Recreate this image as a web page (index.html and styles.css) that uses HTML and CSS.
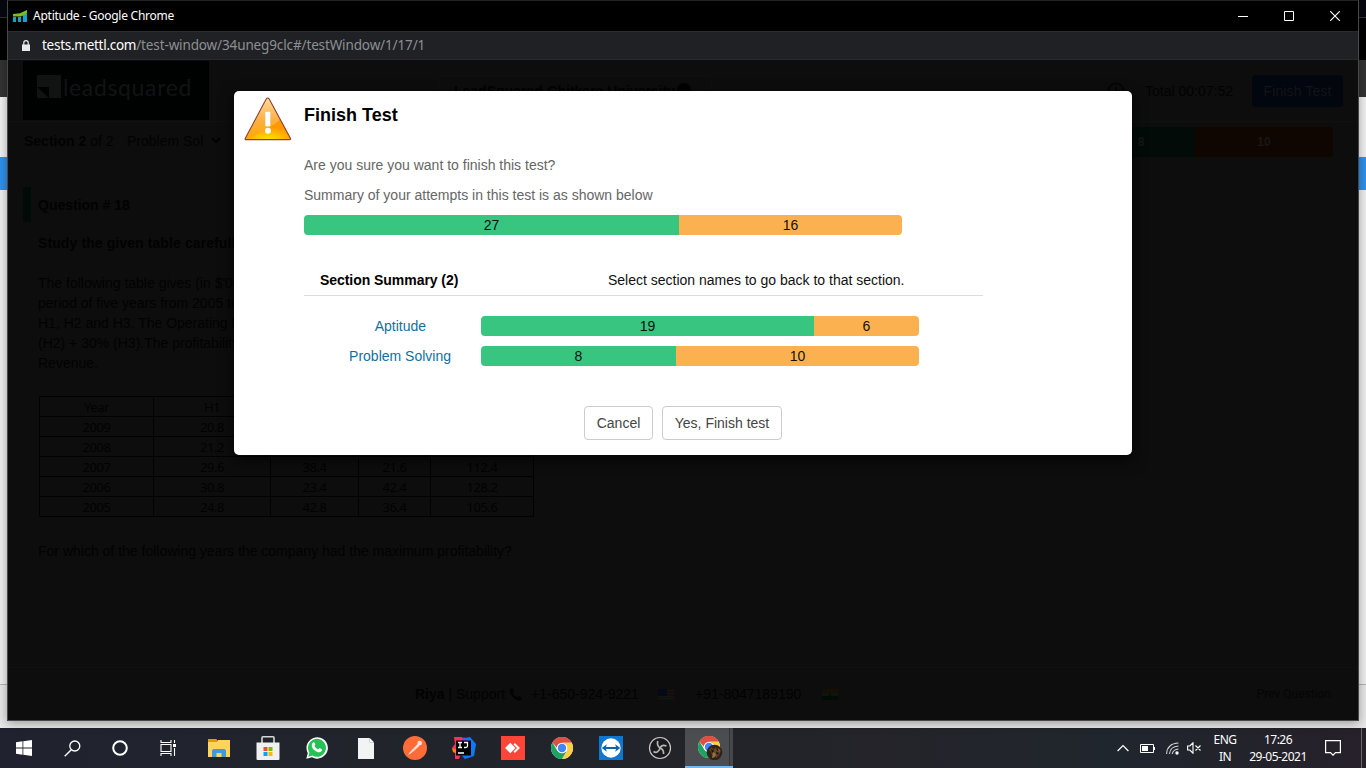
FILE: index.html
```html
<!DOCTYPE html>
<html lang="en">
<head>
<meta charset="utf-8">
<title>Aptitude - Google Chrome</title>
<link rel="stylesheet" href="styles.css">
</head>
<body>
<svg width="0" height="0" class="defs" aria-hidden="true">
  <defs>
    <symbol id="chrome" viewBox="0 0 24 24">
      <circle cx="12" cy="12" r="11" fill="#fff"/>
      <path d="M12 12 2.47 6.5A11 11 0 0 1 21.53 6.5Z" fill="#dd5144"/>
      <path d="M12 1a11 11 0 0 1 9.53 5.5H12L7 12 2.47 6.5A11 11 0 0 1 12 1Z" fill="#dd5144"/>
      <path d="M21.53 6.5A11 11 0 0 1 12 23l5-8.2L16 8l-4-1.5Z" fill="#ffcd46"/>
      <path d="M2.47 6.5A11 11 0 0 0 12 23l4.5-7.7-4.3 1.5L7.5 15Z" fill="#1da462"/>
      <circle cx="12" cy="12" r="5.3" fill="#fff"/>
      <circle cx="12" cy="12" r="4.2" fill="#4285f4"/>
    </symbol>
  </defs>
</svg>
<div class="desktop">
  <div class="behind">
    <div class="b-top"></div><div class="b-black"></div><div class="b-grey"></div><div class="b-light"></div><div class="b-blue"></div><div class="b-page"></div><div class="b-foot"></div>
  </div>

  <div class="window">
    <div class="titlebar">
      <svg class="favicon" width="15" height="12" viewBox="0 0 15 12"><path d="M0 7h3v5H0zM5 7h3v5H5zM10 4h4v8h-4z" fill="#08a7d0"/><path d="M0 4 7 3.2 14 0v3.5L8 6.5H0Z" fill="#78be20"/></svg>
      <span class="title">Aptitude - Google Chrome</span>
      <div class="controls">
        <svg width="10" height="10" viewBox="0 0 10 10"><path d="M0 5.5h10" stroke="#fff"/></svg>
        <svg width="10" height="10" viewBox="0 0 10 10"><path d="M.5.5h9v9h-9z" stroke="#fff" fill="none"/></svg>
        <svg width="10" height="10" viewBox="0 0 10 10"><path d="m.2.2 9.6 9.6M9.8.2.2 9.8" stroke="#fff" stroke-width="1.1"/></svg>
      </div>
    </div>
    <div class="urlbar">
      <svg width="8" height="11" viewBox="0 0 8 11"><path d="M0 4.5h8V11H0z" fill="#e8eaed"/><path d="M1.8 5V2.8a2.2 2.2 0 0 1 4.4 0V5" fill="none" stroke="#e8eaed" stroke-width="1.2"/></svg>
      <span class="url"><b>tests.mettl.com</b>/test-window/34uneg9clc#/testWindow/1/17/1</span>
    </div>

    <div class="page">
      <header class="head">
        <div class="logo">
          <svg width="24" height="23" viewBox="0 0 24 23"><path d="M0 0h24v23H12V12H0Z" fill="#111313"/><path d="M0 12v11h12Z" fill="#111313"/></svg>
          <span>leadsquared</span>
        </div>
        <div class="test-name"><span>LeadSquared-Chitkara University</span><i></i></div>
        <div class="timer">
          <svg width="18" height="18" viewBox="0 0 18 18"><circle cx="9" cy="9" r="7.6" fill="none" stroke="#050505" stroke-width="2"/><path d="M9 4v5h4" fill="none" stroke="#050505" stroke-width="1.5"/></svg>
          <span class="time">Total 00:07:52</span>
          <span class="finish">Finish Test</span>
        </div>
      </header>
      <div class="section-row">
        <span class="sec"><b>Section 2</b> of 2</span>
        <span class="pick">Problem Sol</span>
        <svg width="10" height="7" viewBox="0 0 10 7"><path d="m1 1.2 4 4 4-4" fill="none" stroke="#020202" stroke-width="2"/></svg>
        <div class="mini"><b class="mini-g">8</b><b class="mini-o">10</b></div>
      </div>
      <div class="question-head">Question # 18</div>
      <div class="question">
        <p class="lead">Study the given table carefully</p>
        <p class="para"><span>The following table gives (in $'000)</span><br><span>period of five years from 2005 to</span><br><span>H1, H2 and H3. The Operating Profit</span><br><span>(H2) + 30% (H3).The profitability is</span><br><span>Revenue.</span></p>
        <table class="data">
          <colgroup><col class="c1"><col class="c2"><col class="c3"><col class="c4"><col class="c5"></colgroup>
          <tr><td>Year</td><td>H1</td><td></td><td></td><td></td></tr>
          <tr><td>2009</td><td>20.8</td><td></td><td></td><td></td></tr>
          <tr><td>2008</td><td>21.2</td><td></td><td></td><td></td></tr>
          <tr><td>2007</td><td>29.6</td><td>38.4</td><td>21.6</td><td>112.4</td></tr>
          <tr><td>2006</td><td>30.8</td><td>23.4</td><td>42.4</td><td>128.2</td></tr>
          <tr><td>2005</td><td>24.8</td><td>42.8</td><td>36.4</td><td>105.6</td></tr>
        </table>
        <p class="ask">For which of the following years the company had the maximum profitability?</p>
      </div>
      <footer class="foot">
        <span><b>Riya</b> | Support</span>
        <svg class="phone" width="13" height="13" viewBox="0 0 13 13"><path d="M1 1 3.3 0 5.2 3.2 3.8 4.8Q5 7.6 8 9.2L9.5 7.900 13 9.800 12 12Q9.800 13.800 5.500 10.600 0 6.200 1 1Z" fill="#030303"/></svg>
        <span class="us-num">+1-650-924-9221</span>
        <svg class="us" width="16" height="11" viewBox="0 0 16 11"><path d="M0 0h16v11H0z" fill="#1a0b0b"/><path d="M0 1.500h16M0 4.500h16M0 7.500h16M0 9.500h16" stroke="#141414"/><path d="M0 0h9v7H0z" fill="#030917"/></svg>
        <span class="in-num">+91-8047189190</span>
        <svg class="in" width="16" height="11" viewBox="0 0 16 11"><path d="M0 0h16v4H0z" fill="#151003"/><path d="M0 4h16v3H0z" fill="#121212"/><path d="M0 7h16v4H0z" fill="#020d02"/><circle cx="8" cy="5.5" r="1.3" fill="#070b17"/></svg>
        <span class="prev">Prev Question</span>
      </footer>
    </div>
  </div>

  <div class="modal">
    <svg class="warn" width="48" height="46" viewBox="0 0 48 46">
      <defs><linearGradient id="wg" x1="0" y1="0" x2="0" y2="1"><stop offset="0" stop-color="#ffd9a0"/><stop offset=".55" stop-color="#fbb040"/><stop offset="1" stop-color="#ffa800"/></linearGradient><radialGradient id="wy" cx=".5" cy="1" r=".6"><stop offset="0" stop-color="#ffe400"/><stop offset="1" stop-color="#ff9800"/></radialGradient></defs>
      <path d="M22.2 2Q23.700 0 25.200 2L46.500 41.500Q46.800 42.600 45.500 42.600H2Q.8 42.600 1.200 41.500Z" fill="url(#wg)"/>
      <path d="M1.400 42Q21 35 36.500 22.500L46.500 42Z" fill="url(#wy)"/>
      <path d="M22.200 2Q23.700 0 25.200 2L46.500 41.500Q46.800 42.600 45.500 42.600H2Q.8 42.600 1.200 41.500Z" fill="none" stroke="#8f3f2c" stroke-width="1.100"/>
      <path d="M21.300 14.800h5v14.500h-5z" fill="#fff"/><circle cx="24" cy="33.800" r="3" fill="#fff"/>
    </svg>
    <div class="modal-body">
      <h1><span>Finish Test</span></h1>
      <p class="m1"><span>Are you sure you want to finish this test?</span></p>
      <p class="m2"><span>Summary of your attempts in this test is as shown below</span></p>
      <div class="bar total"><span class="g">27</span><span class="o">16</span></div>
      <div class="sum-head"><b>Section Summary (2)</b><span>Select section names to go back to that section.</span></div>
      <div class="sum-row first"><a><span>Aptitude</span></a><div class="bar apt"><span class="g">19</span><span class="o">6</span></div></div>
      <div class="sum-row"><a><span>Problem Solving</span></a><div class="bar prob"><span class="g">8</span><span class="o">10</span></div></div>
    </div>
    <div class="buttons"><span class="btn cancel">Cancel</span><span class="btn yes">Yes, Finish test</span></div>
  </div>

  <div class="taskbar">
    <div class="cell"><svg width="16" height="16" viewBox="0 0 16 16"><path d="M0 2.2 6.5 1.3v6.2H0zM7.3 1.200 16 0v7.500H7.300zM0 8.400h6.500v6.300L0 13.800zM7.300 8.400H16V16l-8.700-1.200z" fill="#fff"/></svg></div>
    <div class="cell"><svg width="17" height="17" viewBox="0 0 17 17"><circle cx="10.8" cy="6" r="5" fill="none" stroke="#fff" stroke-width="1.3"/><path d="M7.3 9.7.7 16.3" stroke="#fff" stroke-width="1.4"/></svg></div>
    <div class="cell"><svg width="16" height="16" viewBox="0 0 16 16"><circle cx="8" cy="8" r="6.8" fill="none" stroke="#fff" stroke-width="2"/></svg></div>
    <div class="cell"><svg width="17" height="16" viewBox="0 0 17 16"><path d="M1 0v2.5h10V0M1 16v-2.5h10V16M1 4.5h10v7H1zM14.5 0v3M14.5 8v8" fill="none" stroke="#fff" stroke-width="1.1"/><path d="M13 4h3v3h-3z" fill="#fff"/></svg></div>
    <div class="cell g5"><svg width="22" height="19" viewBox="0 0 22 19"><path d="M0 1h8l2 2h11.5v15H0z" fill="#e8a317"/><path d="M0 3h8.500L10 1h12v17H0z" fill="#ffd45c"/><path d="M0 0h8.500l1 2-1 1H0z" fill="#e29a05"/><path d="M4 18v-6.500L5.500 10h11l1.500 1.500V18h-4.500v-4h-5v4z" fill="#3e9adf"/></svg></div>
    <div class="cell g6"><svg width="24" height="24" viewBox="0 0 24 24"><path d="M6 7V1.800Q6 .800 7 .800h10Q18 .800 18 1.800V7" fill="none" stroke="#d7d7d7" stroke-width="1.600"/><path d="M.5 6.500h23V23q0 1-1 1h-21q-1 0-1-1z" fill="#f0f0f0"/><path d="M7.500 11h4v4h-4z" fill="#f25022"/><path d="M12.500 11h4v4h-4z" fill="#7fba00"/><path d="M7.500 16h4v4h-4z" fill="#00a4ef"/><path d="M12.500 16h4v4h-4z" fill="#ffb900"/></svg></div>
    <div class="cell g7"><svg width="22" height="22" viewBox="0 0 22 22"><path d="m.3 21.700 1.500-5.600A10.700 10.700 0 1 1 6 20.300Z" fill="#fff"/><path d="m2.300 19.700 1.100-4a9 9 0 1 1 3 2.900Z" fill="#24c254"/><path d="M7 5.500q1.300-.8 1.800.6l.6 1.500-1 1.400q1.200 2.300 3.700 3.400l1.300-1.400 2.400 1.200q.5.500 0 1.500-1.600 2.400-4.600 1.200Q6.700 13.100 5.800 9.300 5.500 6.800 7 5.500Z" fill="#fff"/></svg></div>
    <div class="cell g8"><svg width="16" height="21" viewBox="0 0 16 21"><path d="M0 0h11.500L16 4.500V21H0z" fill="#f2f4f4"/><path d="M11.500 0v4.500H16" fill="#a8adad"/><path d="M12 .5 15.500 4H12z" fill="#fff"/></svg></div>
    <div class="cell g9"><svg width="24" height="24" viewBox="0 0 24 24"><circle cx="12" cy="12" r="12" fill="#ff6c37"/><path d="M5.500 18 10 12.500l2 1.700L7 18z" fill="#ffc9b5"/><path d="m10.300 12.500 4.500-4.700 2 1.800-4.800 4.500z" fill="#ffd8c9"/><circle cx="16.700" cy="7" r="2.300" fill="#ffe7dd"/><path d="m5.500 18.500 10-9.500" stroke="#fff" stroke-width=".7"/></svg></div>
    <div class="cell g10"><svg width="24" height="24" viewBox="0 0 24 24"><path d="M2 1h8l3 5-6 17H3V14L0 12l3-4z" fill="#fe315d"/><path d="m0 12 5 2v4l-4-2z" fill="#fc801d"/><path d="m13 2 5-1 6 7-2 12-9 3-5-5z" fill="#087cfa"/><path d="m12 1 5 5H8z" fill="#7a46d8"/><path d="M4 4.500h15V19.500H4z" fill="#000"/><path d="M6 6.500h4M8 6.500v5M6 11.500h4M12 6.500h3.500V10q0 1.500-2 1.500H12M6 17h6" fill="none" stroke="#fff" stroke-width="1.300"/></svg></div>
    <div class="cell g11"><svg width="24" height="24" viewBox="0 0 24 24"><path d="M0 0h24v24H0z" fill="#ff4438"/><path d="m9.300 6.800 5.200 5.200-5.200 5.200L4.100 12z" fill="#fff"/><path d="m13.200 7.700 4.300 4.300-4.300 4.300" fill="none" stroke="#fff" stroke-width="2"/></svg></div>
    <div class="cell g12"><svg width="24" height="24"><use href="#chrome"/></svg></div>
    <div class="cell g13"><svg width="24" height="24" viewBox="0 0 24 24"><path d="M0 0h24v24H0z" fill="#0e78d1"/><circle cx="12" cy="12" r="9.700" fill="#fff"/><path d="m2.800 12 5-3.800-.8 2.800h10l-.8-2.800 5 3.800-5 3.800.8-2.800H7l.8 2.800z" fill="#0e62a8"/></svg></div>
    <div class="cell g14"><svg width="24" height="24" viewBox="0 0 24 24"><circle cx="12" cy="12" r="10.500" fill="#1b1a1d" stroke="#c8c8c8" stroke-width="1.200"/><path d="M9.800 5q-1.300 4.500 2.200 7M18.500 10q-4.500-2-6.500 2M5.500 15.500q4 2.500 6.500-3M12 12q4 1.500 3.500 6" fill="none" stroke="#b5b5b7" stroke-width="1.700"/></svg></div>
    <div class="active"><svg width="26" height="26" viewBox="0 0 26 26"><use href="#chrome" width="24" height="24" x="0" y="1"/><circle cx="17.500" cy="18.500" r="7.800" fill="#302217"/><path d="m12 16 3-3 1 3 3-3 1 4 4-1-2 5-3 3-1-4-3 1-1-3z" fill="#664526"/><path d="m16 18 3 2-1 3-3 1zM21 14l2 2-1 2z" fill="#967246"/><path d="m14 15 3 2-2 2zM19 18l3 1-2 2z" fill="#11100d"/></svg></div>
    <div class="tray">
      <svg class="t1" width="12" height="8" viewBox="0 0 12 8"><path d="m.6 7 5.400-5.500L11.400 7" fill="none" stroke="#fff" stroke-width="1.200"/></svg>
      <svg class="t2" width="15" height="9" viewBox="0 0 15 9"><path d="M.5.5h13v8H.5zM14.500 3v3" fill="none" stroke="#fff"/><path d="M2 2h6v5H2z" fill="#fff"/></svg>
      <svg class="t3" width="13" height="13" viewBox="0 0 13 13"><path d="M.6 12Q1 1.500 12.500 1M3.500 12Q4 4.500 12.500 4M6.300 12Q7 7.500 12.500 7" fill="none" stroke="#d0d0d2" stroke-width="1.100"/><circle cx="11" cy="11" r="1.700" fill="#fff"/></svg>
      <svg class="t4" width="14" height="12" viewBox="0 0 14 12"><path d="M.6 4h2.200L6 .8v10.400L2.800 8H.6zM8.500 3.500l5 5M13.500 3.500l-5 5" fill="none" stroke="#fff" stroke-width="1.100"/></svg>
      <div class="lang"><span>ENG</span><span>IN</span></div>
      <div class="clock"><span>17:26</span><span class="date">29-05-2021</span></div>
      <svg class="t5" width="16" height="16" viewBox="0 0 16 16"><path d="M.6.600h14.800v12H10.500L8 15.200 5.500 12.600H.6z" fill="none" stroke="#fff" stroke-width="1.200"/></svg>
    </div>
    <div class="peek"></div>
  </div>
</div>
</body>
</html>
```

FILE: styles.css
```css
* { box-sizing: border-box; }
body { margin: 0; font: 14px/20px "Liberation Sans", Arial, sans-serif; color: #020202; overflow: hidden; }
p, h1 { margin: 0; }
svg { display: block; flex: none; }
.defs { position: absolute; }
.desktop { position: relative; width: 1366px; height: 768px; display: flex; flex-direction: column; overflow: hidden; }

/* application showing round the edges of the window */
.behind { height: 728px; flex: none; display: flex; flex-direction: column; background: #e6e6e6; }
.b-top { height: 18px; background: #07070f; border-bottom: 1px solid #333; }
.b-black { height: 42px; background: #000; }
.b-grey { height: 37px; background: #333; }
.b-light { height: 60px; background: #f2f2f2; }
.b-blue { height: 33px; background: #2f92ee; }
.b-page { height: 495px; background: #f0f0f0; border-bottom: 1px solid #b4b4b4; }
.b-foot { flex: 1; background: #e8e8e8; }

.window { position: absolute; left: 7px; top: 0; width: 1352px; height: 721px; border: 1px solid #484848; border-top-color: #222; background: #0d0d0d; box-shadow: 0 2px 10px rgba(0,0,0,.35); display: flex; flex-direction: column; }
.titlebar { height: 30px; flex: none; background: #000; display: flex; align-items: center; padding-left: 5px; color: #fff; }
.title { font: 12px/16px "Noto Sans", sans-serif; letter-spacing: -.25px; margin-left: 5px; white-space: nowrap; }
.controls { margin-left: auto; display: flex; gap: 36px; padding-right: 18px; }
.urlbar { height: 29px; flex: none; background: #202124; border-top: 1px solid #2a2b2e; border-bottom: 1px solid #292a2d; display: flex; align-items: center; padding: 0 0 1px 14px; }
.url { margin-left: 12px; font: 14px/20px "Noto Sans", sans-serif; font-size: 13.5px; color: #8d9093; white-space: nowrap; letter-spacing: -.13px; }
.url b { font-weight: 400; color: #fff; letter-spacing: -.27px; }

.page { flex: 1; display: flex; flex-direction: column; }
.head { height: 62px; flex: none; display: flex; align-items: flex-start; padding: 1px 15px 0; border-bottom: 1px solid #101010; }
.logo { width: 186px; height: 59px; background: #000202; display: flex; align-items: center; padding: 0 0 9px 14px; color: #111313; }
.logo span { font: 23px/28px Lato, sans-serif; letter-spacing: .65px; margin: 2px 0 0 2px; }
.test-name { margin: 14px 0 0 229px; width: 274px; height: 40px; border: 1px solid #101010; border-radius: 4px; display: flex; align-items: flex-start; padding: 5px 0 0 15px; font-weight: 700; white-space: nowrap; }
.test-name i { width: 14px; height: 14px; border-radius: 50%; background: #020202; margin: 2px 0 0 2px; }
.timer { margin: 14px 0 0 auto; display: flex; align-items: center; height: 32px; white-space: nowrap; }
.time { margin-left: 20px; width: 88px; }
.finish { width: 91px; height: 32px; line-height: 32px; margin-left: 19px; border-radius: 4px; background: #02060f; color: #111418; text-align: center; letter-spacing: .1px; }
.section-row { height: 39px; flex: none; display: flex; align-items: center; padding: 0 25px 2px 16px; }
.sec { width: 103px; }
.pick { width: 84px; }
.mini { margin: 2px 0 0 auto; display: flex; height: 30px; line-height: 30px; width: 246px; border-radius: 4px; overflow: hidden; text-align: center; color: #171717; font-size: 12px; }
.mini-g { width: 108px; background: #020b07; }
.mini-o { flex: 1; background: #0f0602; }
.question-head { margin: 26px 0 0 15px; width: 1320px; height: 35px; line-height: 37px; flex: none; border-left: 8px solid #020a07; padding-left: 7px; font-weight: 700; border-radius: 3px; background: #0d0d0d; }
.question { padding-left: 30px; white-space: nowrap; }
.lead { margin-top: 11px; font-weight: 700; letter-spacing: .1px; }
.para { margin-top: 20px; }
.data { margin: 23px 0 0 1px; width: 495px; table-layout: fixed; border-collapse: collapse; font: 13px/19px "Noto Sans", sans-serif; letter-spacing: -.45px; }
.data td { border: 1px solid #020202; height: 20px; padding: 1px 0 0; text-align: center; line-height: 18px; }
.c1 { width: 114px; } .c2 { width: 117px; } .c3 { width: 88px; } .c4 { width: 72px; } .c5 { width: 103px; }
.ask { margin-top: 24px; }
.foot { margin-top: auto; height: 53px; flex: none; border-top: 1px solid #101010; display: flex; align-items: center; padding: 0 27px 0 407px; white-space: nowrap; }
.phone { margin-left: 4px; }
.us-num { margin-left: 9px; width: 108px; }
.us { margin-left: 19px; }
.in-num { margin-left: 21px; width: 106px; }
.in { margin-left: 21px; }
.prev { margin-left: auto; font: 12px/20px Roboto, sans-serif; color: #050505; }

.modal { position: absolute; left: 234px; top: 91px; width: 898px; height: 364px; border-radius: 5px; background: #fff; box-shadow: 0 5px 15px rgba(0,0,0,.7); display: grid; grid-template: 315px 1fr / 70px 1fr; }
.warn { margin: 6px 0 0 10px; }
.modal-body { min-width: 0; color: #666; }
h1 { margin-top: 12px; font-size: 18px; line-height: 24px; color: #000; letter-spacing: 0; }
.m1 { margin-top: 28px; }
.m2 { margin-top: 10px; }
.bar { display: flex; height: 20px; border-radius: 4px; overflow: hidden; text-align: center; color: #111; }
.bar .g { background: #38c580; }
.bar .o { background: #fcb150; flex: 1; }
.total { width: 598px; margin-top: 10px; }
.total .g { width: 375px; }
.sum-head { width: 679px; margin-top: 35px; height: 26px; border-bottom: 1px solid #ddd; padding-left: 16px; display: flex; color: #000; }
.sum-head b { width: 288px; letter-spacing: -.05px; }
.sum-head > span { color: #111; }
.sum-row { display: flex; margin-top: 10px; }
.sum-row.first { margin-top: 20px; }
.sum-row a { width: 147px; margin-right: 30px; text-align: right; color: #12709f; }
.first a { padding-right: 25px; }
.sum-row .bar { width: 438px; }
.apt .g { width: 333px; }
.prob .g { width: 195px; }
.buttons { grid-column: 1 / 3; display: flex; justify-content: center; gap: 9px; }
.btn { height: 34px; border: 1px solid #ccc; border-radius: 4px; line-height: 32px; text-align: center; color: #444; }
.cancel { width: 69px; }
.yes { width: 120px; }

.taskbar { flex: none; height: 40px; display: flex; background: linear-gradient(90deg, #20232f, #20242a 35%, #24242a 65%, #20262e 82%, #262029); }
.cell { width: 48px; display: flex; align-items: center; justify-content: center; flex: none; }
.g5 { margin-left: 3px; } .g6, .g7, .g8, .g9, .g10, .g11, .g12, .g13, .g14 { width: 49px; }
.active { width: 48px; flex: none; margin-left: 1px; background: linear-gradient(90deg, #4b4d51 44px, #33353a 44px, #33353a 45px, #45474b 45px); border-bottom: 2px solid #76b9ed; display: flex; align-items: center; padding-left: 12px; }
.tray { margin-left: auto; display: flex; align-items: center; color: #fff; font: 12px/17px "Noto Sans", sans-serif; white-space: nowrap; }
.t2 { margin-left: 11px; } .t3 { margin-left: 11px; } .t4 { margin-left: 8px; }
.lang, .clock { display: flex; flex-direction: column; align-items: center; }
.lang { margin-left: 12px; width: 24px; letter-spacing: -.5px; }
.clock { margin-left: 11px; width: 60px; letter-spacing: -.5px; }
.t5 { margin-left: 17px; }
.peek { width: 5px; margin-left: 20px; border-left: 1px solid #666; }
```
